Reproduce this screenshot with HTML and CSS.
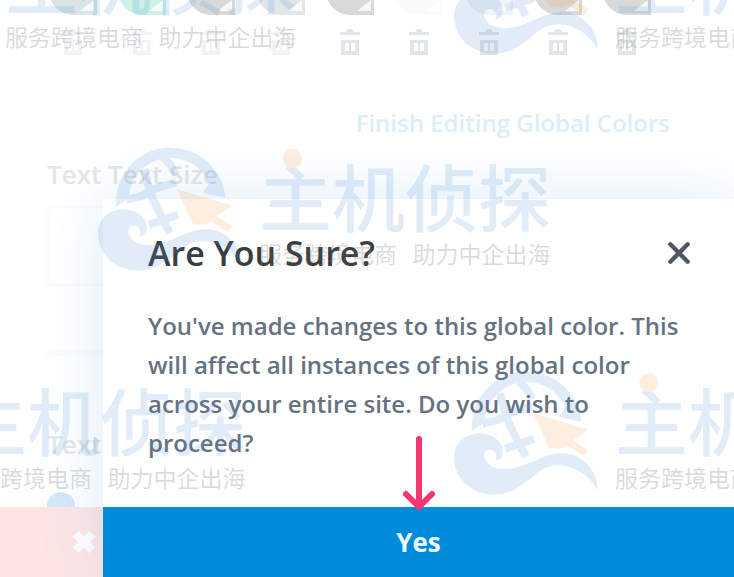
FILE: index.html
```html
<!DOCTYPE html>
<html lang="en">
<head>
<meta charset="UTF-8">
<meta name="viewport" content="width=device-width, initial-scale=1.0">
<title>Global Colors</title>
<link rel="stylesheet" href="styles.css">
</head>
<body>

<!-- Shared shapes -->
<svg class="defs" aria-hidden="true">
    <symbol id="trash" viewBox="0 0 22 26">
        <path d="M1 3h6l2-3h4l2 3h6v3H1z"/>
        <path fill-rule="evenodd" d="M2 11h18v15H2zM6 14v8h4v-8zM12 14v8h4v-8z"/>
    </symbol>
    <symbol id="swatch" viewBox="0 0 48 48">
        <path d="M24 0A24 24 0 0 1 48 24V48H24A24 24 0 0 1 24 0z"/>
        <path fill="#fff" fill-opacity=".8" d="M45 33v11H31z"/>
    </symbol>
    <symbol id="globe" viewBox="51 39 441 390">
        <g fill="#4a90d9">
            <path d="M108 232A164 164 0 0 1 436 203L368 188 388 160A126 126 0 0 0 146 208Q128 214 108 232z"/>
            <path d="M54 310C54 264 92 238 132 238 172 240 202 264 200 294 199 310 190 320 178 319 186 302 176 288 162 288 147 288 142 300 146 313 154 336 178 345 205 345 270 345 320 297 380 297 440 298 486 352 485 408 460 362 405 326 350 335 290 346 262 420 175 422 102 422 54 370 54 310z"/>
        </g>
        <path fill="none" stroke="#4a90d9" stroke-width="24" d="M248 80q26 22 40 56M192 118q16 84 78 190M140 208q46-6 64-20t84-30M208 284l86-30"/>
        <path fill="#f39a3c" d="M290 177l168 50-48 32 48 30-13 17-57-34-3 11h-45z"/>
    </symbol>
</svg>

<main class="page">
    <div class="swatches">
        <div class="swatch blue"><svg class="disc"><use href="#swatch"/></svg><button aria-label="Delete color 1"><svg class="trash"><use href="#trash"/></svg></button></div>
        <div class="swatch green"><svg class="disc"><use href="#swatch"/></svg><button aria-label="Delete color 2"><svg class="trash"><use href="#trash"/></svg></button></div>
        <div class="swatch gray"><svg class="disc"><use href="#swatch"/></svg><button aria-label="Delete color 3"><svg class="trash"><use href="#trash"/></svg></button></div>
        <div class="swatch silver"><svg class="disc"><use href="#swatch"/></svg><button aria-label="Delete color 4"><svg class="trash"><use href="#trash"/></svg></button></div>
        <div class="swatch gray strong"><svg class="disc"><use href="#swatch"/></svg><button aria-label="Delete color 5"><svg class="trash"><use href="#trash"/></svg></button></div>
        <div class="swatch mint strong"><svg class="disc"><use href="#swatch"/></svg><button aria-label="Delete color 6"><svg class="trash"><use href="#trash"/></svg></button></div>
        <div class="swatch pale strong"><svg class="disc"><use href="#swatch"/></svg><button aria-label="Delete color 7"><svg class="trash"><use href="#trash"/></svg></button></div>
        <div class="swatch gray strong"><svg class="disc"><use href="#swatch"/></svg><button aria-label="Delete color 8"><svg class="trash"><use href="#trash"/></svg></button></div>
        <div class="swatch gray strong"><svg class="disc"><use href="#swatch"/></svg><button aria-label="Delete color 9"><svg class="trash"><use href="#trash"/></svg></button></div>
    </div>
    <a class="finish" href="#">Finish Editing Global Colors</a>
    <section class="fields">
        <label for="textSize">Text Text Size</label>
        <input type="text" id="textSize">
        <div class="slider"></div>
        <h3>Text</h3>
        <span class="knob"></span>
    </section>
    <button class="discard" aria-label="Discard">
        <svg viewBox="0 0 24 24"><path d="M5 5l14 14M19 5L5 19"/></svg>
    </button>
</main>

<div class="modal" role="dialog" aria-labelledby="modalTitle">
    <div class="modal-body">
        <header>
            <h2 id="modalTitle">Are You Sure?</h2>
            <button class="close" aria-label="Close">
                <svg viewBox="0 0 24 24"><path d="M4 4l16 16M20 4L4 20"/></svg>
            </button>
        </header>
        <p>You've made changes to this global color. This will affect all instances of this global color across your entire site. Do you wish to proceed?</p>
    </div>
    <button class="yes">Yes</button>
    <svg class="arrow" viewBox="0 0 32 76"><path d="M16 3v68M3 58l13 13 13-13"/></svg>
</div>

<!-- Watermark layer -->
<div class="watermarks">
    <div class="watermark top-left"><svg class="globe"><use href="#globe"/></svg><div class="brand"><span class="wordmark">主机侦探</span><span class="tagline">服务跨境电商   助力中企出海</span></div></div>
    <div class="watermark top-right"><svg class="globe"><use href="#globe"/></svg><div class="brand"><span class="wordmark">主机侦探</span><span class="tagline">服务跨境电商   助力中企出海</span></div></div>
    <div class="watermark middle"><svg class="globe"><use href="#globe"/></svg><div class="brand"><span class="wordmark">主机侦探</span><span class="tagline">服务跨境电商   助力中企出海</span></div></div>
    <div class="watermark bottom-left"><svg class="globe"><use href="#globe"/></svg><div class="brand"><span class="wordmark">主机侦探</span><span class="tagline">服务跨境电商   助力中企出海</span></div></div>
    <div class="watermark bottom-right"><svg class="globe"><use href="#globe"/></svg><div class="brand"><span class="wordmark">主机侦探</span><span class="tagline">服务跨境电商   助力中企出海</span></div></div>
</div>

</body>
</html>
```
FILE: styles.css
```css
body {
    font-family: "Open Sans", sans-serif;
    margin: 0;
    min-height: 100vh;
    position: relative;
    overflow: hidden;
    background-color: #fff;
}
button {
    font-family: inherit;
    border: none;
    padding: 0;
    background: none;
    cursor: pointer;
}
.defs {
    position: absolute;
    width: 0;
    height: 0;
}

/* Settings page behind the modal */
.page {
    min-height: 100vh;
    display: flex;
    flex-direction: column;
}
.swatches {
    display: flex;
    padding: 0 72px 0 38px;
    margin-top: -33px;
}
.swatch {
    flex: 1;
    display: flex;
    flex-direction: column;
    align-items: center;
    gap: 14px;
}
.disc {
    width: 48px;
    height: 48px;
}
.swatch button {
    display: flex;
}
.trash {
    width: 22px;
    height: 26px;
    fill: #f1f4f6;
}
.strong .trash {
    fill: #e3e6e8;
}
.blue .disc { fill: #d9e4e6; }
.green .disc { fill: #cdf3e8; }
.gray .disc { fill: #d9d9d9; }
.silver .disc { fill: #e2e4e6; }
.mint .disc { fill: #f8fcfb; }
.pale .disc { fill: #f1f4f6; }

.finish {
    align-self: flex-end;
    margin: 52px 64px 0 0;
    font-size: 24px;
    font-weight: 600;
    line-height: 32px;
    color: #dceefb;
    text-decoration: none;
}
.fields {
    flex: 1;
    display: flex;
    flex-direction: column;
    padding-left: 47px;
    margin-top: 19px;
}
.fields label,
.fields h3 {
    margin: 0;
    font-size: 26px;
    font-weight: 600;
    line-height: 32px;
    color: #e6e6e6;
}
.fields input {
    height: 80px;
    box-sizing: border-box;
    margin: 16px 48px 0 0;
    border: 2px solid #fafcfd;
    border-radius: 4px;
    background: #fff;
}
.slider {
    height: 6px;
    margin: 64px 48px 0 0;
    border-radius: 3px;
    background-color: #fafcfd;
}
.fields h3 {
    margin-top: 72px;
}
.knob {
    width: 28px;
    height: 15px;
    margin-top: auto;
    border-radius: 14px 14px 0 0;
    background-color: #d5e8f9;
}
.discard {
    height: 70px;
    padding-left: 70px;
    background-color: #fde5e5;
    text-align: left;
}
.discard svg {
    width: 28px;
    height: 28px;
    stroke: #fff;
    stroke-width: 7;
    vertical-align: middle;
}

/* Confirmation modal */
.modal {
    position: absolute;
    left: 103px;
    right: 0;
    top: 199px;
    bottom: 0;
    display: flex;
    flex-direction: column;
    background-color: #fff;
    box-shadow: 0 0 60px rgba(43, 135, 218, 0.16);
}
.modal-body {
    flex: 1;
    padding: 36px 42px 0 45px;
}
.modal header {
    display: flex;
    justify-content: space-between;
    align-items: center;
}
.modal h2 {
    margin: 0;
    font-size: 34px;
    font-weight: 600;
    line-height: 36px;
    color: #3a3d40;
}
.close {
    display: flex;
}
.close svg {
    width: 26px;
    height: 26px;
    fill: none;
    stroke: #4c5866;
    stroke-width: 4;
    stroke-linecap: round;
}
.modal p {
    margin: 35px 0 0;
    font-size: 24px;
    font-weight: 600;
    line-height: 39px;
    color: #667282;
}
.yes {
    height: 70px;
    background-color: #008bdb;
    color: #e9f8ff;
    font-size: 26px;
    font-weight: 700;
}
.arrow {
    position: absolute;
    left: 300px;
    bottom: 65px;
    width: 32px;
    height: 76px;
    fill: none;
    stroke: #f5366f;
    stroke-width: 6;
    stroke-linecap: round;
    stroke-linejoin: round;
}

/* Repeated watermark */
.watermarks {
    position: absolute;
    inset: 0;
    overflow: hidden;
    pointer-events: none;
}
.watermark {
    position: absolute;
    display: flex;
    gap: 15px;
    font-family: "Noto Sans CJK SC", sans-serif;
}
.top-left { left: -157px; top: -74px; }
.top-right { left: 453px; top: -74px; }
.middle { left: 97px; top: 143px; }
.bottom-left { left: -208px; top: 367px; }
.bottom-right { left: 453px; top: 367px; }
.globe {
    width: 147px;
    height: 130px;
    opacity: 0.16;
}
.brand {
    display: flex;
    flex-direction: column;
}
.wordmark {
    position: relative;
    margin-top: 13px;
    font-size: 73px;
    font-weight: 500;
    line-height: 76px;
    white-space: nowrap;
    color: #4a90d9;
    opacity: 0.16;
}
/* Orange dot on the first character */
.wordmark::before {
    content: '';
    position: absolute;
    left: 24px;
    top: -7px;
    width: 19px;
    height: 19px;
    border-radius: 50%;
    background-color: #f39a3c;
}
.tagline {
    margin-top: 5px;
    font-size: 23px;
    font-weight: 400;
    line-height: 32px;
    white-space: pre;
    color: rgba(110, 110, 110, 0.25);
}
```
